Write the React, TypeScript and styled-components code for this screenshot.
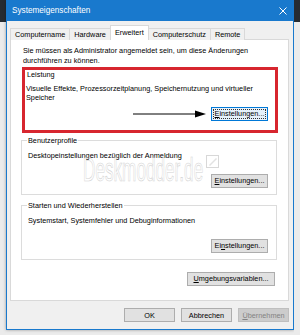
import React from 'react';
import styled, { createGlobalStyle } from 'styled-components';

const GlobalStyle = createGlobalStyle`
    html, body {
        margin: 0;
        padding: 0;
    }
    body {
        background: #e9e9e9;
        font-family: "Liberation Sans", Arial, sans-serif;
    }
`;

const Desktop = styled.div`
    display: flex;
    width: 300px;
    height: 335px;
    overflow: hidden;
    background: #ececec;
`;

const Strip = styled.div<{ $w: number }>`
    width: ${(p) => p.$w}px;
    flex-shrink: 0;
    background: linear-gradient(#262b31 0 22px, #ebebeb 22px);
`;

const Window = styled.div`
    width: 288px;
    height: 330px;
    flex-shrink: 0;
    box-sizing: border-box;
    display: flex;
    flex-direction: column;
    background: #f0f0f0;
    border: 1px solid #1979cd;
    border-top: none;
    box-shadow: 0 0 3px rgba(0, 0, 0, 0.35);
`;

const TitleBar = styled.div`
    height: 21px;
    flex-shrink: 0;
    display: flex;
    align-items: center;
    justify-content: space-between;
    padding: 0 6px 0 5px;
    background: #1979cd;
    color: #fff;
    font-size: 8.2px;
`;

const Body = styled.div`
    flex: 1;
    padding: 5px 4px 0 3px;
`;

const Tabs = styled.div`
    display: flex;
    align-items: flex-end;
    height: 14px;
    margin: 0 0 -1px 1px;
    position: relative;
    z-index: 1;
`;

const Tab = styled.div<{ $active?: boolean }>`
    box-sizing: border-box;
    height: ${(p) => (p.$active ? 15 : 12)}px;
    padding: 0 4px;
    margin-left: -1px;
    display: flex;
    align-items: center;
    justify-content: center;
    padding-bottom: ${(p) => (p.$active ? 1 : 0)}px;
    border: 1px solid #d9d9d9;
    border-bottom: none;
    background: ${(p) => (p.$active ? '#fff' : '#f0f0f0')};
    font-size: 7.3px;
    color: #000;
    white-space: nowrap;
`;

const Panel = styled.div`
    position: relative;
    box-sizing: border-box;
    height: 262px;
    border: 1px solid #d9d9d9;
    background: #fff;
    padding: 6px 11px 0 10px;
    display: flex;
    flex-direction: column;
`;

const Text = styled.div<{ $indent?: number }>`
    font-size: 7.3px;
    line-height: 9.5px;
    color: #000;
    white-space: nowrap;
    margin-left: ${(p) => p.$indent ?? 0}px;
`;

const RedFrame = styled.div`
    margin: 2px -1px 0 1px;
    border: 3px solid #d7262f;
`;

const Group = styled.fieldset<{ $plain?: boolean }>`
    margin: 0;
    min-width: 0;
    border: ${(p) => (p.$plain ? 'none' : '1px solid #dcdcdc')};
    padding: 0 ${(p) => (p.$plain ? 7 : 8)}px ${(p) => (p.$plain ? 9 : 6)}px
        ${(p) => (p.$plain ? 1 : 5)}px;
`;

const Legend = styled.legend<{ $lift?: number }>`
    padding: 0 1px;
    margin-top: ${(p) => -(p.$lift ?? 0)}px;
    font-size: 7.3px;
    line-height: 9.5px;
    color: #000;
`;

const GroupText = styled(Text)<{ $gap: number }>`
    margin-top: ${(p) => p.$gap}px;
`;

const ButtonRow = styled.div<{ $gap: number }>`
    display: flex;
    justify-content: flex-end;
    align-items: center;
    gap: 5px;
    margin-top: ${(p) => p.$gap}px;
`;

const Section = styled.div<{ $gap: number }>`
    margin-top: ${(p) => p.$gap}px;
`;

const Button = styled.div<{ $w: number; $kind?: 'focus' | 'disabled' }>`
    box-sizing: border-box;
    width: ${(p) => p.$w}px;
    height: 14px;
    display: flex;
    align-items: center;
    justify-content: center;
    font-size: 7.3px;
    white-space: nowrap;
    border: 1px solid
        ${(p) =>
            p.$kind === 'focus'
                ? '#0078d7'
                : p.$kind === 'disabled'
                ? '#bfbfbf'
                : '#adadad'};
    background: ${(p) =>
        p.$kind === 'focus'
            ? '#e5f1fb'
            : p.$kind === 'disabled'
            ? '#cccccc'
            : '#e1e1e1'};
    color: ${(p) => (p.$kind === 'disabled' ? '#838383' : '#000')};
    outline: ${(p) => (p.$kind === 'focus' ? '1px dotted #333' : 'none')};
    outline-offset: -3px;
`;

const Key = styled.span`
    text-decoration: underline;
`;

const Footer = styled.div`
    display: flex;
    justify-content: flex-end;
    gap: 6px;
    padding: 7px 0 0 0;
`;

const Watermark = styled.div`
    position: absolute;
    left: 72px;
    top: 118px;
    font-family: "Liberation Sans", Arial, sans-serif;
    font-size: 33px;
    line-height: 24px;
    color: transparent;
    -webkit-text-stroke: 0.7px #d2d2d2;
    transform: scaleX(0.52);
    transform-origin: left top;
    white-space: nowrap;
    pointer-events: none;
`;

const Pencil = styled.svg`
    position: absolute;
    left: 195px;
    top: 115px;
`;

const Arrow = () => (
    <svg width="73" height="8" viewBox="0 0 73 8">
        <line x1="0" y1="4" x2="63" y2="4" stroke="#000" strokeWidth="1" />
        <polygon points="62,0.5 73,4 62,7.5" fill="#000" />
    </svg>
);

const Close = () => (
    <svg width="8" height="8" viewBox="0 0 8 8">
        <path d="M0.5 0.5 L7.5 7.5 M7.5 0.5 L0.5 7.5" stroke="#fff" strokeWidth="1" />
    </svg>
);

export default function App() {
    return (
        <>
            <GlobalStyle />
            <Desktop>
                <Strip $w={6} />
                <Window>
                    <TitleBar>
                        <span>Systemeigenschaften</span>
                        <Close />
                    </TitleBar>
                    <Body>
                        <Tabs>
                            <Tab>Computername</Tab>
                            <Tab>Hardware</Tab>
                            <Tab $active>Erweitert</Tab>
                            <Tab>Computerschutz</Tab>
                            <Tab>Remote</Tab>
                        </Tabs>
                        <Panel>
                            <Text $indent={2}>
                                Sie müssen als Administrator angemeldet sein, um diese Änderungen
                                <br />
                                durchführen zu können.
                            </Text>
                            <RedFrame>
                                <Group $plain>
                                    <Legend $lift={1}>Leistung</Legend>
                                    <GroupText $gap={4}>
                                        Visuelle Effekte, Prozessorzeitplanung, Speichernutzung und virtueller
                                        <br />
                                        Speicher
                                    </GroupText>
                                    <ButtonRow $gap={4}>
                                        <Arrow />
                                        <Button $w={57} $kind="focus">
                                            <Key>E</Key>instellungen...
                                        </Button>
                                    </ButtonRow>
                                </Group>
                            </RedFrame>
                            <Section $gap={3}>
                                <Group>
                                    <Legend>Benutzerprofile</Legend>
                                    <GroupText $gap={6} $indent={1}>
                                        Desktopeinstellungen bezüglich der Anmeldung
                                    </GroupText>
                                    <ButtonRow $gap={13}>
                                        <Button $w={57}>
                                            <Key>E</Key>instellungen...
                                        </Button>
                                    </ButtonRow>
                                </Group>
                            </Section>
                            <Section $gap={6}>
                                <Group>
                                    <Legend>Starten und Wiederherstellen</Legend>
                                    <GroupText $gap={6} $indent={1}>
                                        Systemstart, Systemfehler und Debuginformationen
                                    </GroupText>
                                    <ButtonRow $gap={13}>
                                        <Button $w={57}>
                                            Ei<Key>n</Key>stellungen...
                                        </Button>
                                    </ButtonRow>
                                </Group>
                            </Section>
                            <ButtonRow $gap={12}>
                                <Button $w={88} style={{ marginRight: 2 }}>
                                    <Key>U</Key>mgebungsvariablen...
                                </Button>
                            </ButtonRow>
                            <Watermark>Deskmodder.de</Watermark>
                            <Pencil width="13" height="13" viewBox="0 0 13 13">
                                <rect x="0.5" y="0.5" width="12" height="12" fill="none" stroke="#d8d8d8" />
                                <path d="M3 10 L10 3 L11 4 L4 11 Z" fill="#e2e2e2" />
                            </Pencil>
                        </Panel>
                        <Footer>
                            <Button $w={51}>OK</Button>
                            <Button $w={51}>Abbrechen</Button>
                            <Button $w={51} $kind="disabled">
                                <Key>Ü</Key>bernehmen
                            </Button>
                        </Footer>
                    </Body>
                </Window>
                <Strip $w={6} />
            </Desktop>
        </>
    );
}
